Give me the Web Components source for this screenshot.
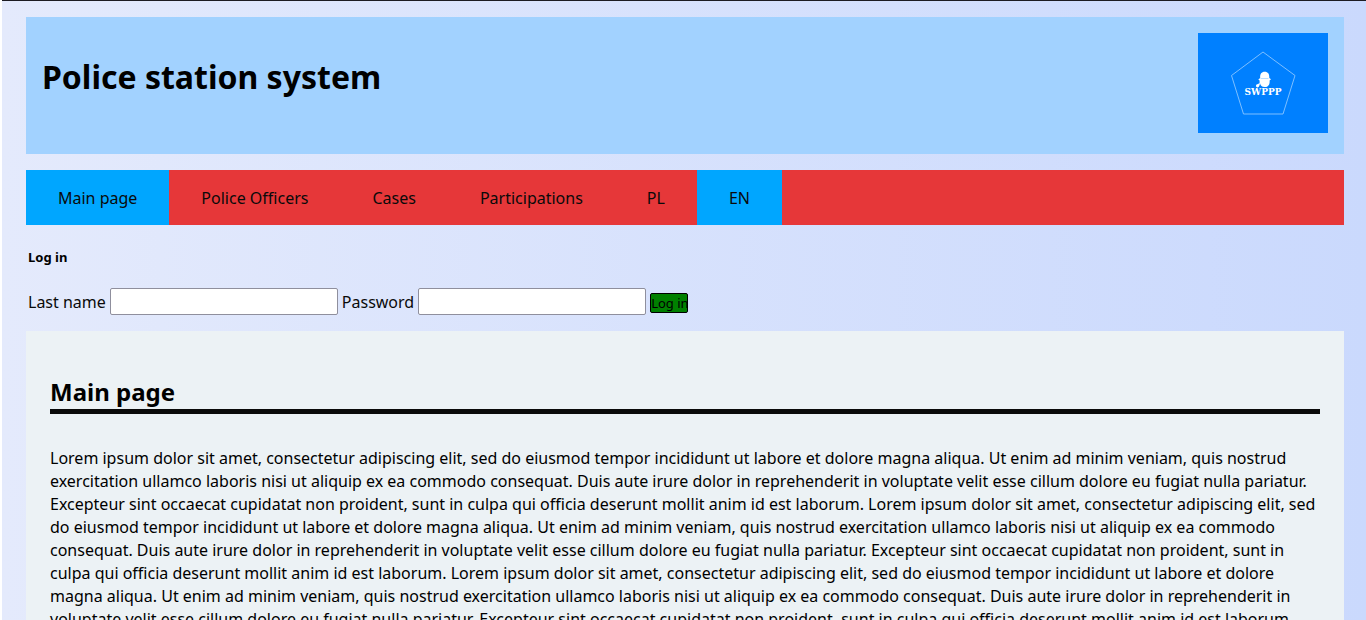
<!DOCTYPE html>
<html lang="en">
<head>
<meta charset="utf-8">
<meta name="viewport" content="width=device-width, initial-scale=1">
<title>Police station system</title>
<style>
  html { background: #fff; }
  body { margin: 0; font: 16px/23px "Noto Sans", sans-serif; color: #0a0a0a; }
</style>
</head>
<body>
<station-page>
  <site-header slot="header">Police station system</site-header>
  <site-nav slot="nav">
    <nav-tab href="#main" current>Main page</nav-tab>
    <nav-tab href="#officers">Police Officers</nav-tab>
    <nav-tab href="#cases">Cases</nav-tab>
    <nav-tab href="#participations">Participations</nav-tab>
    <nav-tab href="#pl">PL</nav-tab>
    <nav-tab href="#en" current>EN</nav-tab>
  </site-nav>
  <login-form slot="login"></login-form>
  <content-panel heading="Main page">
    Lorem ipsum dolor sit amet, consectetur adipiscing elit, sed do eiusmod tempor incididunt ut labore et dolore magna aliqua. Ut enim ad minim veniam, quis nostrud exercitation ullamco laboris nisi ut aliquip ex ea commodo consequat. Duis aute irure dolor in reprehenderit in voluptate velit esse cillum dolore eu fugiat nulla pariatur. Excepteur sint occaecat cupidatat non proident, sunt in culpa qui officia deserunt mollit anim id est laborum.
    Lorem ipsum dolor sit amet, consectetur adipiscing elit, sed do eiusmod tempor incididunt ut labore et dolore magna aliqua. Ut enim ad minim veniam, quis nostrud exercitation ullamco laboris nisi ut aliquip ex ea commodo consequat. Duis aute irure dolor in reprehenderit in voluptate velit esse cillum dolore eu fugiat nulla pariatur. Excepteur sint occaecat cupidatat non proident, sunt in culpa qui officia deserunt mollit anim id est laborum.
    Lorem ipsum dolor sit amet, consectetur adipiscing elit, sed do eiusmod tempor incididunt ut labore et dolore magna aliqua. Ut enim ad minim veniam, quis nostrud exercitation ullamco laboris nisi ut aliquip ex ea commodo consequat. Duis aute irure dolor in reprehenderit in voluptate velit esse cillum dolore eu fugiat nulla pariatur. Excepteur sint occaecat cupidatat non proident, sunt in culpa qui officia deserunt mollit anim id est laborum.
  </content-panel>
</station-page>
<script>
class BaseElement extends HTMLElement {
  constructor() {
    super();
    this.attachShadow({ mode: "open" }).innerHTML = this.constructor.markup;
  }
}

customElements.define("station-page", class extends BaseElement {
  static markup = `
    <style>
      :host {
        display: block; margin-left: 2px; padding: 16px 22px 16px 24px;
        border-top: 1px solid #1c1b22;
        background: linear-gradient(to right, #e4eafc, #cad9fd);
      }
      main { display: block; }
    </style>
    <slot name="header"></slot>
    <slot name="nav"></slot>
    <slot name="login"></slot>
    <main><slot></slot></main>`;
});

customElements.define("site-header", class extends BaseElement {
  static markup = `
    <style>
      :host { display: block; }
      header {
        display: flex; justify-content: space-between; align-items: flex-start;
        padding: 16px 16px 21px; background: #a2d2ff;
      }
      h1 { margin: 22px 0; font-size: 32px; line-height: 44px; font-weight: 700; color: #000; }
    </style>
    <header><h1><slot></slot></h1><station-logo></station-logo></header>`;
});

customElements.define("station-logo", class extends BaseElement {
  static markup = `
    <style>
      :host { display: block; flex: none; }
      svg { display: block; }
      text { font: 700 9px "DejaVu Serif", serif; }
    </style>
    <svg width="130" height="100" viewBox="0 0 130 100" role="img" aria-label="SWPPP">
      <rect width="130" height="100" fill="#0080ff"/>
      <path d="M65 19 L97 42.500 L85 81 H45.500 L33.500 42.500 Z" fill="none" stroke="#8cc6ff" stroke-width=".9"/>
      <path d="M62.200 45 C61.800 41 63.500 38.800 66.700 38.800 C70 38.800 71.500 41 71.300 45 L73 46.300 L71.600 47.400 C72 51.500 70.300 54 66.800 54 C63.800 54 62.600 52.500 62.100 50.500 L61.300 52.800 Q60.600 54.800 58.900 54.300 Q57.300 53.200 58.200 51.700 L61.600 50.200 L61.600 47.400 L60.300 46.500 Z" fill="#fff"/>
      <path d="M62.500 45.500 H70.500" stroke="#8cc6ff" stroke-width=".6"/>
      <text x="65" y="62" text-anchor="middle" fill="#fff">SWPPP</text>
    </svg>`;
});

customElements.define("site-nav", class extends BaseElement {
  static markup = `
    <style>
      :host { display: block; margin-top: 16px; }
      nav { display: flex; flex-wrap: wrap; background: #e63739; }
    </style>
    <nav><slot></slot></nav>`;
});

customElements.define("nav-tab", class extends BaseElement {
  static markup = `
    <style>
      :host { display: block; }
      :host([current]) { background: #00a6ff; }
      a { display: block; padding: 17px 32px 15px; color: #0a0a0a; text-decoration: none; }
    </style>
    <a><slot></slot></a>`;
  connectedCallback() {
    this.shadowRoot.querySelector("a").href = this.getAttribute("href");
  }
});

customElements.define("login-form", class extends BaseElement {
  static markup = `
    <style>
      :host { display: block; padding: 23px 2px 16px; }
      h2 { margin: 0 0 21px; font-size: 13px; line-height: 19px; font-weight: 700; color: #000; }
      form { display: flex; flex-wrap: wrap; align-items: center; gap: 4px; }
      label { padding-top: 2px; }
      input {
        box-sizing: border-box; width: 228px; height: 27px; margin: 0; padding: 1px 2px;
        border: 1px solid #8f8f9d; border-radius: 2px; background: #fff; font: inherit;
      }
      button {
        box-sizing: border-box; width: 38px; height: 20px; margin: 2px 0 0; padding: 0;
        border: 1px solid #000; border-radius: 2px; background: #008000; color: #000;
        font: 13px/18px "Noto Sans", sans-serif; white-space: nowrap;
      }
    </style>
    <h2>Log in</h2>
    <form>
      <label for="last-name">Last name</label>
      <input id="last-name" type="text">
      <label for="password">Password</label>
      <input id="password" type="password">
      <button type="button">Log in</button>
    </form>`;
});

customElements.define("content-panel", class extends BaseElement {
  static markup = `
    <style>
      :host { display: block; padding: 24px; background: #ecf2f5; }
      h2 {
        margin: 20px 0 33px; border-bottom: 5px solid #0a0a0a;
        font-size: 24px; line-height: 34px; font-weight: 700; color: #000;
      }
      p { margin: 0; color: #000; }
    </style>
    <h2></h2>
    <p><slot></slot></p>`;
  connectedCallback() {
    this.shadowRoot.querySelector("h2").textContent = this.getAttribute("heading");
  }
});
</script>
</body>
</html>
